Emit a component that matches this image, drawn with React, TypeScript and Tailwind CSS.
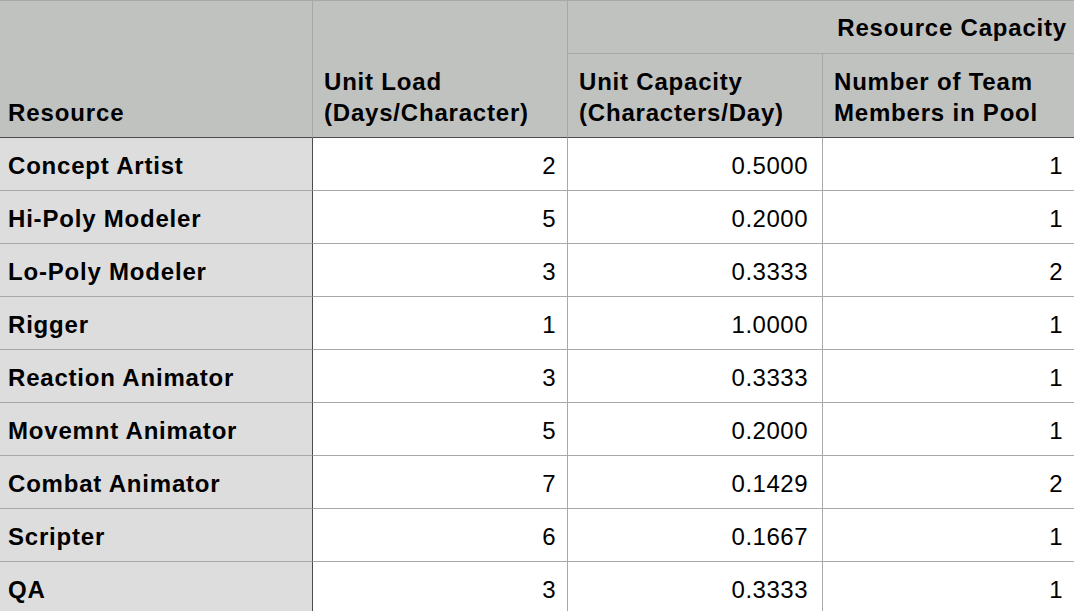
const rows: [string, number, string, number][] = [
  ["Concept Artist", 2, "0.5000", 1],
  ["Hi-Poly Modeler", 5, "0.2000", 1],
  ["Lo-Poly Modeler", 3, "0.3333", 2],
  ["Rigger", 1, "1.0000", 1],
  ["Reaction Animator", 3, "0.3333", 1],
  ["Movemnt Animator", 5, "0.2000", 1],
  ["Combat Animator", 7, "0.1429", 2],
  ["Scripter", 6, "0.1667", 1],
  ["QA", 3, "0.3333", 1],
];

const font = "font-['Liberation_Sans',Arial,sans-serif]";

export default function App() {
  return (
    <div className={`h-[611px] w-[1074px] overflow-hidden bg-white text-black ${font}`}>
      <div className="grid grid-cols-[313px_255px_255px_260px] border-t border-[#a8a8a8]">
        {/* header */}
        <div className="row-span-2 flex h-[137px] items-end border-r border-b border-r-[#a8a8a8] border-b-[#4c4c4c] bg-[#c0c2c0] pb-[9px] pl-[8px] text-[24px] leading-[30px] font-bold tracking-[0.9px]">
          Resource
        </div>
        <div className="row-span-2 flex h-[137px] items-end border-r border-b border-r-[#a8a8a8] border-b-[#4c4c4c] bg-[#c0c2c0] pb-[9px] pl-[11px] text-[24px] leading-[31px] font-bold tracking-[0.8px]">
          <span>
            Unit Load
            <br />
            (Days/Character)
          </span>
        </div>
        <div className="col-span-2 flex h-[53px] items-center justify-end border-b border-[#a8a8a8] bg-[#c0c2c0] pr-[16px] pt-[2px] text-[24px] font-bold tracking-[0.8px]">
          Resource Capacity
        </div>
        <div className="flex h-[84px] items-end border-r border-b border-r-[#a8a8a8] border-b-[#4c4c4c] bg-[#c0c2c0] pb-[9px] pl-[11px] text-[24px] leading-[31px] font-bold tracking-[0.8px]">
          <span>
            Unit Capacity
            <br />
            (Characters/Day)
          </span>
        </div>
        <div className="flex h-[84px] items-end border-b border-b-[#4c4c4c] bg-[#c0c2c0] pb-[9px] pl-[11px] text-[24px] leading-[31px] font-bold tracking-[0.8px]">
          <span>
            Number of Team
            <br />
            Members in Pool
          </span>
        </div>

        {/* body */}
        {rows.map(([name, load, cap, members]) => (
          <div key={name} className="contents">
            <div className="flex h-[53px] items-center border-r border-b border-r-[#4c4c4c] border-b-[#a8a8a8] bg-[#dddddd] pt-[3px] pl-[8px] text-[24px] font-bold tracking-[0.8px]">
              {name}
            </div>
            <div className="flex h-[53px] items-center justify-end border-r border-b border-[#a8a8a8] pt-[3px] pr-[11px] text-[24px] tracking-[0.5px]">
              {load}
            </div>
            <div className="flex h-[53px] items-center justify-end border-r border-b border-[#a8a8a8] pt-[3px] pr-[14px] text-[24px] tracking-[0.5px]">
              {cap}
            </div>
            <div className="flex h-[53px] items-center justify-end border-b border-[#a8a8a8] pt-[3px] pr-[20px] text-[24px] tracking-[0.5px]">
              {members}
            </div>
          </div>
        ))}
      </div>
    </div>
  );
}
